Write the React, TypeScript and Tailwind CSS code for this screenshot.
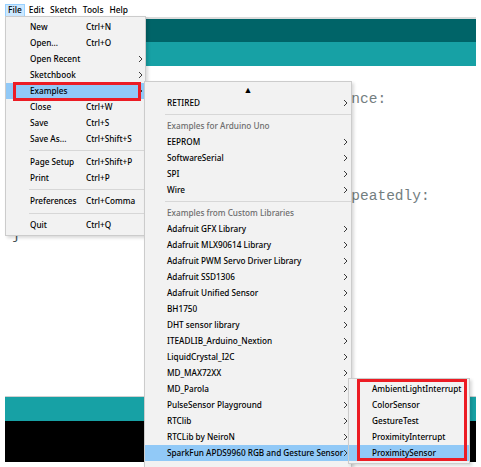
import React from "react";

const Chevron = () => (
  <svg width="5" height="8" viewBox="0 0 5 8" className="shrink-0">
    <path d="M1 1 L4 4 L1 7" fill="none" stroke="#3a3a3a" strokeWidth="1" />
  </svg>
);

type FileItem =
  | { sep: number }
  | { sep?: undefined; label: string; shortcut?: string; arrow?: boolean; active?: boolean };

const fileItems: FileItem[] = [
  { label: "New", shortcut: "Ctrl+N" },
  { label: "Open...", shortcut: "Ctrl+O" },
  { label: "Open Recent", arrow: true },
  { label: "Sketchbook", arrow: true },
  { label: "Examples", arrow: true, active: true },
  { label: "Close", shortcut: "Ctrl+W" },
  { label: "Save", shortcut: "Ctrl+S" },
  { label: "Save As...", shortcut: "Ctrl+Shift+S" },
  { sep: 7 },
  { label: "Page Setup", shortcut: "Ctrl+Shift+P" },
  { label: "Print", shortcut: "Ctrl+P" },
  { sep: 7 },
  { label: "Preferences", shortcut: "Ctrl+Comma" },
  { sep: 8 },
  { label: "Quit", shortcut: "Ctrl+Q" },
];

type ExItem =
  | { kind: "sep" }
  | { kind: "header"; label: string }
  | { kind: "item"; label: string; active?: boolean };

const exItems: ExItem[] = [
  { kind: "item", label: "RETIRED" },
  { kind: "sep" },
  { kind: "header", label: "Examples for Arduino Uno" },
  { kind: "item", label: "EEPROM" },
  { kind: "item", label: "SoftwareSerial" },
  { kind: "item", label: "SPI" },
  { kind: "item", label: "Wire" },
  { kind: "sep" },
  { kind: "header", label: "Examples from Custom Libraries" },
  { kind: "item", label: "Adafruit GFX Library" },
  { kind: "item", label: "Adafruit MLX90614 Library" },
  { kind: "item", label: "Adafruit PWM Servo Driver Library" },
  { kind: "item", label: "Adafruit SSD1306" },
  { kind: "item", label: "Adafruit Unified Sensor" },
  { kind: "item", label: "BH1750" },
  { kind: "item", label: "DHT sensor library" },
  { kind: "item", label: "ITEADLIB_Arduino_Nextion" },
  { kind: "item", label: "LiquidCrystal_I2C" },
  { kind: "item", label: "MD_MAX72XX" },
  { kind: "item", label: "MD_Parola" },
  { kind: "item", label: "PulseSensor Playground" },
  { kind: "item", label: "RTClib" },
  { kind: "item", label: "RTCLib by NeiroN" },
  { kind: "item", label: "SparkFun APDS9960 RGB and Gesture Sensor", active: true },
];

const sfItems = [
  "AmbientLightInterrupt",
  "ColorSensor",
  "GestureTest",
  "ProximityInterrupt",
  "ProximitySensor",
];

const codeLines: { text: string; comment?: boolean }[] = [
  { text: "void setup() {" },
  { text: "  // put your setup code here, to run once:", comment: true },
  { text: " " },
  { text: "}" },
  { text: " " },
  { text: "void loop() {" },
  { text: "  // put your main code here, to run repeatedly:", comment: true },
  { text: " " },
  { text: "}" },
];

export default function App() {
  return (
    <div className="relative w-[481px] h-[467px] overflow-hidden bg-white font-['Noto_Sans',sans-serif] font-[500] text-[8.2px] text-black">
      {/* IDE window */}
      <div className="ml-[5px] w-[471px] h-[462px] flex flex-col">
        <div className="h-[17px] flex items-end gap-[2px] leading-none text-[8.4px]">
          <div className="h-[13px] px-[2px] flex items-center bg-[#cce8ff] border border-[#99d1ff]">File</div>
          <div className="h-[13px] px-[2px] flex items-center">Edit</div>
          <div className="h-[13px] px-[2px] flex items-center">Sketch</div>
          <div className="h-[13px] px-[2px] flex items-center">Tools</div>
          <div className="h-[13px] px-[2px] flex items-center">Help</div>
        </div>
        <div className="h-[2px] bg-[#dcdcdc]" />
        <div className="h-[23px] bg-[#006468]" />
        <div className="h-[24px] bg-[#17a1a5]" />
        <div className="flex-1 bg-white pt-[5px] pl-[7px] font-['Liberation_Mono',monospace] font-normal text-[14.5px] leading-[19.4px]">
          {codeLines.map((l, i) => (
            <div key={i} className={`whitespace-pre ${l.comment ? "text-[#737e7f]" : "text-[#434f54]"}`}>
              {l.text}
            </div>
          ))}
        </div>
        <div className="h-[1px] bg-[#d0d0d0]" />
        <div className="h-[24px] bg-[#17a1a5]" />
        <div className="h-[41px] bg-black" />
      </div>

      {/* File menu */}
      <div className="absolute left-[5px] top-[16px] w-[141px] bg-[#f2f2f2] border border-[#cccccc] py-[2px] z-10 shadow-[2px_2px_3px_rgba(0,0,0,0.15)]">
        {fileItems.map((it, i) =>
          it.sep !== undefined ? (
            <div key={i} className={`${it.sep === 8 ? "h-[8px]" : "h-[7px]"} flex items-center pl-[23px]`}>
              <div className="h-[1px] w-full bg-[#d7d7d7]" />
            </div>
          ) : (
            <div
              key={i}
              className={`h-[16px] flex items-center pl-[24px] pr-[2px] ${it.active ? "bg-[#91c9f7]" : ""}`}
            >
              <span className="w-[56px] whitespace-nowrap">{it.label}</span>
              <span className="flex-1 whitespace-nowrap">{it.shortcut ?? ""}</span>
              {it.arrow ? <Chevron /> : null}
            </div>
          )
        )}
      </div>

      {/* Examples submenu */}
      <div className="absolute left-[144px] top-[81px] w-[208px] h-[400px] bg-[#f2f2f2] border border-[#cccccc] z-20 shadow-[2px_2px_3px_rgba(0,0,0,0.15)]">
        <div className="h-[13px] flex items-center justify-center text-[9px] leading-none pt-[2px]">▲</div>
        {exItems.map((it, i) => {
          if (it.kind === "sep")
            return (
              <div key={i} className="h-[7px] flex items-center pl-[20px]">
                <div className="h-[1px] w-full bg-[#d7d7d7]" />
              </div>
            );
          if (it.kind === "header")
            return (
              <div key={i} className="h-[16px] flex items-center pl-[22px] text-[#6d6d6d] whitespace-nowrap">
                {it.label}
              </div>
            );
          return (
            <div
              key={i}
              className={`h-[16px] flex items-center pl-[22px] pr-[3px] ${it.active ? "bg-[#91c9f7]" : ""}`}
            >
              <span className="flex-1 whitespace-nowrap">{it.label}</span>
              <Chevron />
            </div>
          );
        })}
      </div>

      {/* SparkFun submenu */}
      <div className="absolute left-[348px] top-[378px] w-[122px] bg-[#f2f2f2] border border-[#cccccc] py-[2px] z-30 shadow-[2px_2px_3px_rgba(0,0,0,0.15)]">
        {sfItems.map((s, i) => (
          <div
            key={s}
            className={`h-[16px] flex items-center pl-[23px] whitespace-nowrap ${i === 4 ? "bg-[#91c9f7]" : ""}`}
          >
            {s}
          </div>
        ))}
      </div>

      {/* Red highlight boxes */}
      <div className="absolute left-[13px] top-[82px] w-[128px] h-[19px] border-[3px] border-[#ec1c24] z-40" />
      <div className="absolute left-[357px] top-[379px] w-[110px] h-[82px] border-[3px] border-[#ec1c24] z-40" />
    </div>
  );
}
